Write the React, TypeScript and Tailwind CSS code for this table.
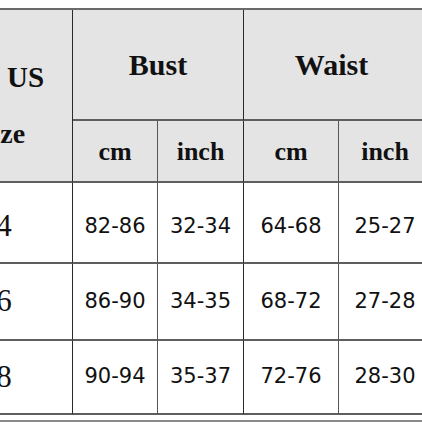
const serif = { fontFamily: '"Liberation Serif", "Times New Roman", serif' }

const rows = [
  { size: '4', bcm: '82-86', bin: '32-34', wcm: '64-68', win: '25-27', h: 'h-[81px]', pt: 'pt-2' },
  { size: '6', bcm: '86-90', bin: '34-35', wcm: '68-72', win: '27-28', h: 'h-[77px]', pt: 'pt-0' },
  { size: '8', bcm: '90-94', bin: '35-37', wcm: '72-76', win: '28-30', h: 'h-[74px]', pt: 'pt-0' },
]

const line = 'border-b-2 border-b-[#5e5e5e]'
const vDark = 'border-r border-r-[#2a2a2a]'
const vLight = 'border-r border-r-[#555]'

export default function App() {
  return (
    <div className="w-[422px] h-[422px] overflow-hidden bg-white">
      <div className="ml-[-64px] mt-2 w-[495px] border-t-2 border-t-[#6a6a6a] text-[#111]">
        {/* header */}
        <div className="flex bg-[#e4e4e4]">
          <div className={`w-[137px] h-[173px] ${vDark} ${line} flex flex-col items-start font-bold`} style={serif}>
            <span className="text-[29px] leading-none mt-[53px] ml-[71px]">US</span>
            <span className="text-[28px] leading-none mt-[28px] ml-[41px]">Size</span>
          </div>
          <div className="flex flex-col">
            <div className="flex">
              <div className={`w-[171px] h-[111px] ${vDark} ${line} flex items-center justify-center text-[30px] font-bold`} style={serif}>
                Bust
              </div>
              <div className={`w-[187px] h-[111px] ${line} pr-3 flex items-center justify-center text-[30px] font-bold`} style={serif}>
                Waist
              </div>
            </div>
            <div className="flex text-[26px] font-bold" style={serif}>
              <div className={`w-[85px] h-[62px] ${vLight} ${line} flex items-center justify-center`}>cm</div>
              <div className={`w-[86px] h-[62px] ${vDark} ${line} flex items-center justify-center`}>inch</div>
              <div className={`w-[95px] h-[62px] ${vLight} ${line} flex items-center justify-center`}>cm</div>
              <div className={`w-[92px] h-[62px] ${line} flex items-center justify-center`}>inch</div>
            </div>
          </div>
        </div>
        {/* body */}
        {rows.map((r) => (
          <div key={r.size} className={`flex ${r.h}`}>
            <div className={`w-[137px] ${vDark} ${line} ${r.pt} flex items-center justify-center text-[31px]`} style={serif}>
              {r.size}
            </div>
            <div className="flex text-[21px]" style={{ fontFamily: '"DejaVu Sans", sans-serif' }}>
              <div className={`w-[85px] ${vLight} ${line} ${r.pt} flex items-center justify-center`}>{r.bcm}</div>
              <div className={`w-[86px] ${vDark} ${line} ${r.pt} flex items-center justify-center`}>{r.bin}</div>
              <div className={`w-[95px] ${vLight} ${line} ${r.pt} flex items-center justify-center`}>{r.wcm}</div>
              <div className={`w-[92px] ${line} ${r.pt} flex items-center justify-center`}>{r.win}</div>
            </div>
          </div>
        ))}
        <div className="mt-[5px] border-t-2 border-t-[#8a8a8a]" />
      </div>
    </div>
  )
}
